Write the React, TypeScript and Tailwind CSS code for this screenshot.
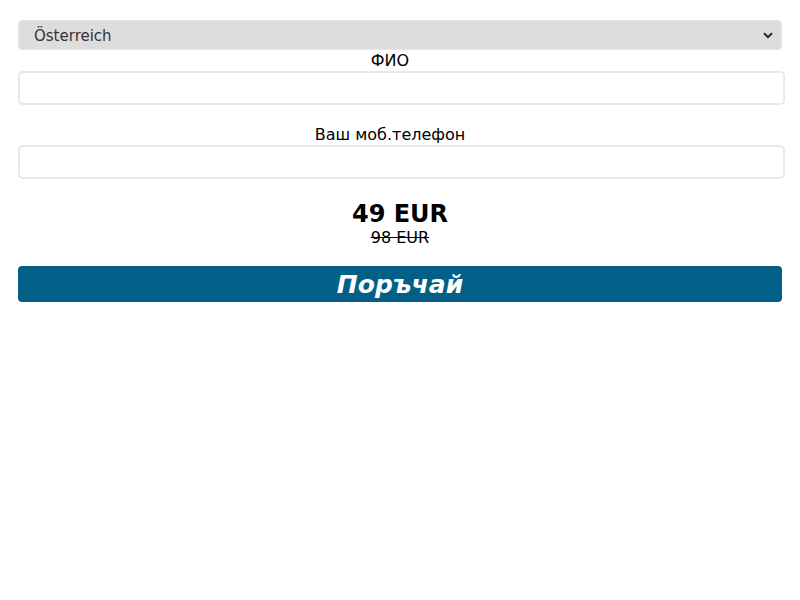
import { useState } from "react";

export default function App() {
  const [country, setCountry] = useState("AT");
  const [name, setName] = useState("");
  const [phone, setPhone] = useState("");

  return (
    <div
      className="min-h-screen bg-white px-[18px] pt-[20px] text-black"
      style={{ fontFamily: '"DejaVu Sans", Verdana, sans-serif' }}
    >
      <form className="flex flex-col" onSubmit={(e) => e.preventDefault()}>
        <div className="relative">
          <select
            value={country}
            onChange={(e) => setCountry(e.target.value)}
            className="h-[30px] w-full appearance-none rounded-[4px] border border-[#e6e6e6] bg-[#dddddd] pl-[15px] pt-[2px] text-[15px] text-[#333] outline-none"
          >
            <option value="AT">Österreich</option>
            <option value="DE">Deutschland</option>
            <option value="BG">България</option>
          </select>
          <svg
            className="pointer-events-none absolute right-[9px] top-[12px]"
            width="10"
            height="7"
            viewBox="0 0 10 7"
          >
            <path d="M1 1.2l4 4 4-4" fill="none" stroke="#222" strokeWidth="2" />
          </svg>
        </div>

        <label className="mr-[20px] block pt-[1px] text-center text-[16px] leading-[20px]">ФИО</label>
        <input
          value={name}
          onChange={(e) => setName(e.target.value)}
          className="h-[34px] w-[calc(100%+3px)] rounded-[5px] border-2 border-[#e8e8e8] px-2 outline-none"
        />

        <label className="mr-[20px] mt-[19px] block text-center text-[16px] leading-[21px]">
          Ваш моб.телефон
        </label>
        <input
          value={phone}
          onChange={(e) => setPhone(e.target.value)}
          className="h-[34px] w-[calc(100%+3px)] rounded-[5px] border-2 border-[#e8e8e8] px-2 outline-none"
        />

        <div className="mt-[21px] text-center text-[24px] font-bold leading-[28px]">49 EUR</div>
        <div className="text-center text-[16px] leading-[20px] line-through">98 EUR</div>

        <button
          type="submit"
          className="mt-[18px] h-[36px] w-full rounded-[4px] bg-[#025f88] text-[25px] font-bold italic text-white"
        >
          Поръчай
        </button>
      </form>
    </div>
  );
}
